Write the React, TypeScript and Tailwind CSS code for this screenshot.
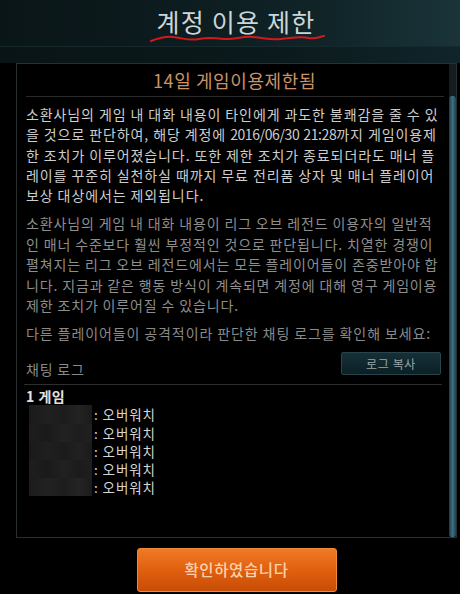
import React from "react";

const font = "font-['Noto_Sans_CJK_KR','Noto_Sans',sans-serif]";

const para1 = [
  "소환사님의 게임 내 대화 내용이 타인에게 과도한 불쾌감을 줄 수 있",
  "DATE",
  "한 조치가 이루어졌습니다. 또한 제한 조치가 종료되더라도 매너 플",
  "레이를 꾸준히 실천하실 때까지 무료 전리품 상자 및 매너 플레이어",
  "보상 대상에서는 제외됩니다.",
];

const para2 = [
  "소환사님의 게임 내 대화 내용이 리그 오브 레전드 이용자의 일반적",
  "인 매너 수준보다 훨씬 부정적인 것으로 판단됩니다. 치열한 경쟁이",
  "펼쳐지는 리그 오브 레전드에서는 모든 플레이어들이 존중받아야 합",
  "니다. 지금과 같은 행동 방식이 계속되면 계정에 대해 영구 게임이용",
  "제한 조치가 이루어질 수 있습니다.",
];

const blur = [
  "bg-[linear-gradient(90deg,#1a1a1a,#202020_30%,#1c1c1c_55%,#232323_80%,#1a1a1a)]",
  "bg-[linear-gradient(90deg,#1d1d1d,#1a1a1a_30%,#222222_55%,#1d1d1d_80%,#202020)]",
  "bg-[linear-gradient(90deg,#191919,#1f1f1f_30%,#1b1b1b_55%,#212121_80%,#1b1b1b)]",
  "bg-[linear-gradient(90deg,#1e1e1e,#1a1a1a_30%,#212121_55%,#1b1b1b_80%,#1f1f1f)]",
  "bg-[linear-gradient(90deg,#1b1b1b,#222222_30%,#1d1d1d_55%,#242424_80%,#1b1b1b)]",
];

export default function App() {
  return (
    <div className={`w-[460px] h-[594px] bg-black overflow-hidden ${font}`}>
      <div className="h-[46px] bg-[linear-gradient(90deg,#0a1517,#0d1d20_45%,#11262a_75%,#1a3439)] flex justify-center">
        <div className="relative pt-[4px] ml-[12px]">
          <h1 className="text-[25px] leading-[34px] text-[#c9d6da] tracking-[1.2px]">계정 이용 제한</h1>
          <svg className="absolute left-[-8px] top-[29px]" width="180" height="14" viewBox="0 0 180 14">
            <path
              d="M2 12 C10 9 16 7 24 8 C34 9 40 12 50 10 C60 8 66 9 76 10 C86 11 92 7 104 8 C116 9 120 11 132 10 C144 9 150 7 160 9 C166 10 170 8 175 7"
              fill="none"
              stroke="#d4181c"
              strokeWidth="2"
              strokeLinecap="round"
            />
          </svg>
        </div>
      </div>
      <div className="h-[17px] border-t border-[#16292c] bg-[linear-gradient(90deg,#091416,#0b1a1c_60%,#10242a)]" />
      <div className="ml-[16px] w-[441px] h-[475px] border border-[#2a2f32] bg-black flex">
        <div className="flex-1 pl-[9px] pr-[6px]">
          <div className="h-[32px] flex items-center justify-center text-[18px] tracking-[0.6px] text-[#c99268]">14일 게임이용제한됨</div>
          <div className="h-px bg-[#2b2b2b] mr-[-1px]" />
          <div className="mt-[7px] text-[14px] leading-[20.3px] text-[#cdcdcd] tracking-[0.9px] whitespace-nowrap">
            {para1.map((l) =>
              l === "DATE" ? (
                <div key={l}>
                  을 것으로 판단하여, 해당 계정에 <span className="tracking-[-0.4px]">2016/06/30</span>{" "}
                  <span className="tracking-[-0.4px]">21:28</span>까지 게임이용제
                </div>
              ) : (
                <div key={l}>{l}</div>
              )
            )}
          </div>
          <div className="mt-[8px] text-[14px] leading-[20.5px] text-[#8e8e8e] tracking-[0.85px] whitespace-nowrap">
            {para2.map((l) => (
              <div key={l}>{l}</div>
            ))}
          </div>
          <div className="mt-[7px] text-[14px] leading-[20.5px] text-[#8a8a8a] tracking-[0.9px] whitespace-nowrap">
            다른 플레이어들이 공격적이라 판단한 채팅 로그를 확인해 보세요:
          </div>
          <div className="mt-[9px] flex items-end justify-between pr-[2px]">
            <span className="text-[14px] leading-[20px] text-[#8a8a8a] tracking-[0.8px] mb-[-4px]">채팅 로그</span>
            <button className="w-[100px] h-[23px] rounded-[2px] border border-[#29454c] bg-[linear-gradient(180deg,#163038,#0c1f24)] text-[12px] tracking-[0.6px] text-[#9aa6a8]">
              로그 복사
            </button>
          </div>
          <div className="h-px bg-[#2e2e2e] mt-[9px] ml-[-2px] mr-[1px]" />
          <div className="mt-[1px] text-[14px] leading-[20px] text-[#e2e2e2] font-semibold tracking-[0.5px]">1 게임</div>
          <div className="mt-[-1px] pl-[3px]">
            {blur.map((b, i) => (
              <div key={i} className="flex items-center h-[18.2px]">
                <div className={`w-[63px] h-full ${b}`} />
                <span className="text-[13.5px] text-[#d6d6d6] ml-[2px] tracking-[0.9px]">: 오버워치</span>
              </div>
            ))}
          </div>
        </div>
        <div className="w-[7px] flex flex-col">
          <div className="h-[32px] bg-[#151b1e]" />
          <div className="flex-1 rounded-[2px] bg-[linear-gradient(90deg,#1c3a46,#3d6e82_50%,#21414e)]" />
        </div>
      </div>
      <div className="flex justify-center mt-[10px] pl-[13px]">
        <button className="w-[200px] h-[44px] rounded-[3px] border border-[#f08a3a] bg-[linear-gradient(180deg,#f07a26,#e0600f_50%,#c84c06)] text-[15.5px] tracking-[0.6px] text-[#fbd2ad] font-medium">
          확인하였습니다
        </button>
      </div>
    </div>
  );
}
